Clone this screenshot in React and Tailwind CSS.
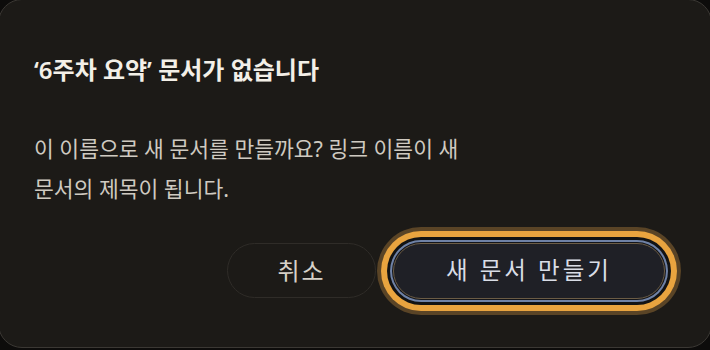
export default function App() {
  const font = { fontFamily: '"Noto Sans", "Noto Sans CJK KR", sans-serif' };
  return (
    <div className="w-[710px] h-[350px] bg-[#0d0c0b] overflow-hidden" style={font}>
      <div className="-ml-[2px] -mt-[1px] w-[714px] h-[349px] rounded-[24px] border border-[#3b3834] bg-[#1c1a17] flex flex-col">
        <div className="pl-[35px] pt-[52px]">
          <h2 className="text-[24px] leading-[36px] font-semibold text-[#f3efe7]">
            ‘6주차 요약’ 문서가 없습니다
          </h2>
          <p className="mt-[41px] max-w-[470px] break-keep text-[21.5px] leading-[40px] text-[#cfcac1]">
            이 이름으로 새 문서를 만들까요? 링크 이름이 새 문서의 제목이 됩니다.
          </p>
        </div>
        <div className="mt-[34px] flex justify-end gap-[17px] pr-[46px]">
          <button className="w-[149px] h-[55px] rounded-full border border-[#2f2c28] bg-[#1c1a17] text-[24px] tracking-[2px] text-[#d6d1c8]">
            취소
          </button>
          <button className="w-[272px] h-[56px] rounded-full border border-[#6b5c45] bg-[#1f2026] text-[23.5px] tracking-[3px] text-[#d9dde6] shadow-[0_0_0_1px_#141519,0_0_0_3px_#6f82a6,0_0_0_6px_#121314,0_0_0_12px_#e9a43f,0_0_0_16px_#5a4426]">
            새 문서 만들기
          </button>
        </div>
      </div>
    </div>
  );
}
